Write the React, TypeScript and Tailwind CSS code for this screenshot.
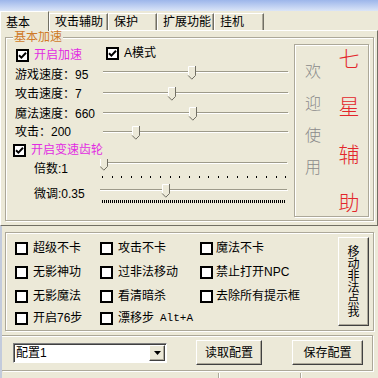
import React from 'react'

const etched = 'border border-[#aca899] shadow-[inset_1px_1px_0_#fff,1px_1px_0_#fff]'
const raised =
  'border border-t-white border-l-white border-r-[#404040] border-b-[#404040] shadow-[inset_-1px_-1px_0_#aca899] bg-[#ece9d8]'

function Check({ on }: { on?: boolean }) {
  return (
    <span className="w-[13px] h-[13px] shrink-0 bg-white border-2 border-black flex items-center justify-center">
      {on && (
        <svg width="9" height="9" viewBox="0 0 9 9">
          <path d="M1 4.2l2.4 2.4L8 1.8" stroke="#000" strokeWidth="2" fill="none" />
        </svg>
      )}
    </span>
  )
}

type SliderProps = {
  w: number
  h: number
  track: number
  thumb: number
  ticks?: 'sparse' | 'dense'
  tickY?: number
}

function Slider({ w, h, track, thumb, ticks, tickY = 0 }: SliderProps) {
  const t = track - 6
  const marks: number[] = []
  if (ticks === 'sparse') for (let i = 0; i < 20; i++) marks.push(Math.round(2 + i * 9.65))
  if (ticks === 'dense') for (let x = 2; x < w - 2; x += 2) marks.push(x)
  return (
    <svg width={w} height={h} className="shrink-0 block">
      <rect x="0" y={track - 1} width={w - 1} height="1" fill="#9d9a8a" />
      <rect x="0" y={track} width={w} height="1" fill="#ffffff" />
      {marks.map((x) => (
        <rect key={x} x={x} y={tickY} width="1" height={ticks === 'dense' ? 3 : 2} fill="#000" />
      ))}
      <polygon
        points={`${thumb},${t} ${thumb + 7},${t} ${thumb + 7},${t + 9} ${thumb + 3.5},${t + 13} ${thumb},${t + 9}`}
        fill="#ece9d8"
      />
      <polyline
        points={`${thumb + 0.5},${t + 9} ${thumb + 0.5},${t + 0.5} ${thumb + 7},${t + 0.5}`}
        stroke="#fff"
        fill="none"
      />
      <polyline
        points={`${thumb + 7.5},${t} ${thumb + 7.5},${t + 9.5} ${thumb + 3.8},${t + 13.2} ${thumb + 0.2},${t + 9.5}`}
        stroke="#716f64"
        fill="none"
      />
    </svg>
  )
}

function SpeedRow({ label, h, track, thumb }: { label: string; h: number; track: number; thumb: number }) {
  return (
    <div className="flex items-center pl-[9px]" style={{ height: h }}>
      <span className="w-[88px] shrink-0 whitespace-nowrap">{label}</span>
      <Slider w={186} h={h} track={track} thumb={thumb} />
    </div>
  )
}

const tabs = [
  { name: '基本', w: 'w-[49px]' },
  { name: '攻击辅助', w: 'w-[59px]' },
  { name: '保护', w: 'w-[49px]' },
  { name: '扩展功能', w: 'w-[57px]' },
  { name: '挂机', w: 'w-[50px]' },
]

const opts = [
  ['超级不卡', '攻击不卡', '魔法不卡'],
  ['无影神功', '过非法移动', '禁止打开NPC'],
  ['无影魔法', '看清暗杀', '去除所有提示框'],
  ['开启76步', '漂移步', ''],
]

export default function App() {
  return (
    <div className="w-[378px] h-[378px] overflow-hidden bg-[#ece9d8] text-[12px] leading-none text-black font-['Liberation_Sans','Noto_Sans_CJK_SC',sans-serif] flex flex-col">
      <div className="h-[11px] shrink-0 bg-gradient-to-b from-[#9db6ea] to-[#dbe5f7]" />

      {/* tabs */}
      <div className="h-[19px] shrink-0 flex items-end">
        {tabs.map((t, i) =>
          i === 0 ? (
            <div
              key={t.name}
              className={`${t.w} h-[20px] -mb-[1px] relative z-10 bg-[#ece9d8] border-t border-l border-r border-t-white border-l-white border-r-[#716f64] pl-[5px] pt-[2px] flex items-center`}
            >
              {t.name}
            </div>
          ) : (
            <div
              key={t.name}
              className={`${t.w} h-[17px] border-t border-l border-r border-t-white border-l-white border-r-[#716f64] shadow-[inset_-1px_0_0_#aca899] pl-[5px] flex items-center`}
            >
              {t.name}
            </div>
          ),
        )}
      </div>

      {/* tab panel */}
      <div className="h-[196px] shrink-0 border border-t-white border-l-white border-r-[#716f64] border-b-[#716f64]">
        <div className={`relative mt-[6px] ml-[4px] w-[369px] h-[184px] ${etched} flex`}>
          <span className="absolute -top-[7px] left-[7px] px-[1px] bg-[#ece9d8] text-[#cf7a28]">基本加速</span>

          <div className="w-[288px] shrink-0 pt-[7px] flex flex-col">
            <div className="h-[20px] flex items-center pl-[10px]">
              <Check on />
              <span className="ml-[5px] text-[#e22ce2]">开启加速</span>
              <div className="ml-[24px] mb-[4px] flex items-center">
                <Check on />
                <span className="ml-[5px]">A模式</span>
              </div>
            </div>
            <SpeedRow label="游戏速度：95" h={19} track={7} thumb={85} />
            <SpeedRow label="攻击速度：7" h={20} track={9} thumb={65} />
            <SpeedRow label="魔法速度：660" h={19} track={9} thumb={86} />
            <SpeedRow label="攻击：200" h={18} track={9} thumb={29} />
            <div className="h-[18px] flex items-center pl-[7px]">
              <Check on />
              <span className="ml-[5px] text-[#e22ce2]">开启变速齿轮</span>
            </div>
            <div className="h-[22px] flex items-start pl-[28px]">
              <span className="w-[66px] shrink-0 mt-[4px]">倍数:1</span>
              <Slider w={188} h={22} track={4} thumb={0} ticks="sparse" tickY={17} />
            </div>
            <div className="h-[24px] flex items-start pl-[28px]">
              <span className="w-[66px] shrink-0 mt-[7px]">微调:0.35</span>
              <Slider w={188} h={24} track={9} thumb={62} ticks="dense" tickY={19} />
            </div>
          </div>

          <div className={`mt-[6px] w-[75px] h-[173px] ${etched} flex`}>
            <div className="w-[36px] pt-[18px] flex flex-col items-center gap-[14px] text-[16px] leading-[18px] text-[#8a8a8a] font-light">
              <span>欢</span>
              <span>迎</span>
              <span>使</span>
              <span>用</span>
            </div>
            <div className="w-[36px] pt-[3px] flex flex-col items-center gap-[26px] text-[21px] leading-[22px] text-[#e3262b] font-light">
              <span>七</span>
              <span>星</span>
              <span>辅</span>
              <span>助</span>
            </div>
          </div>
        </div>
      </div>

      <div className="flex-1 flex flex-col border-l-2 border-[#c3cbdc]">
        {/* options */}
        <div className={`mt-[6px] ml-[3px] w-[369px] h-[99px] ${etched} flex`}>
          <div className="w-[332px] pt-[3px] pl-[9px] flex flex-col">
            {opts.map((row, r) => (
              <div key={r} className={`${r === 3 ? 'h-[20px]' : 'h-[24px]'} flex items-center`}>
                {row.map((o, c) => (
                  <div
                    key={c}
                    className={`${c === 0 ? 'w-[85px]' : c === 1 ? 'w-[100px]' : 'flex-1'} flex items-center whitespace-nowrap`}
                  >
                    {o && (
                      <>
                        <Check />
                        <span className={c === 2 ? 'ml-[3px]' : 'ml-[5px]'}>{o}</span>
                        {o === '漂移步' && (
                          <span className="ml-[6px] text-[11px] font-['Liberation_Mono',monospace]">Alt+A</span>
                        )}
                      </>
                    )}
                  </div>
                ))}
              </div>
            ))}
          </div>
          <button
            className={`mt-[4px] w-[31px] h-[89px] ${raised} flex items-center justify-center`}
          >
            <span className="w-[12px] leading-[12px] break-all text-center">移动非法点我</span>
          </button>
        </div>

        {/* config bar */}
        <div className="mt-[4px] w-[371px] h-[36px] border-t border-r border-b border-[#aca899] shadow-[inset_0_1px_0_#fff,1px_1px_0_#fff] flex flex-col">
          <div className="mt-[4px] h-[25px] pl-[11px] flex items-center">
            <div className="w-[154px] h-[20px] bg-white border border-t-[#808080] border-l-[#808080] border-r-white border-b-white shadow-[inset_1px_1px_0_#404040] flex items-center">
              <span className="pl-[2px] flex-1">配置1</span>
              <div className={`w-[16px] h-[16px] mr-[1px] ${raised} flex items-center justify-center`}>
                <svg width="7" height="4" viewBox="0 0 7 4">
                  <path d="M0 0h7L3.5 4z" fill="#000" />
                </svg>
              </div>
            </div>
            <button className={`ml-[29px] w-[66px] h-[25px] ${raised}`}>读取配置</button>
            <button className={`ml-[30px] w-[71px] h-[25px] ${raised}`}>保存配置</button>
          </div>
        </div>

        {/* status bar */}
        <div className="mt-[2px] flex-1 flex">
          <div className="w-[217px] border-r border-[#aca899]" />
          <div className="w-[82px] border-l border-r border-l-white border-r-[#aca899]" />
          <div className="flex-1 border-l border-white" />
        </div>
      </div>
    </div>
  )
}
